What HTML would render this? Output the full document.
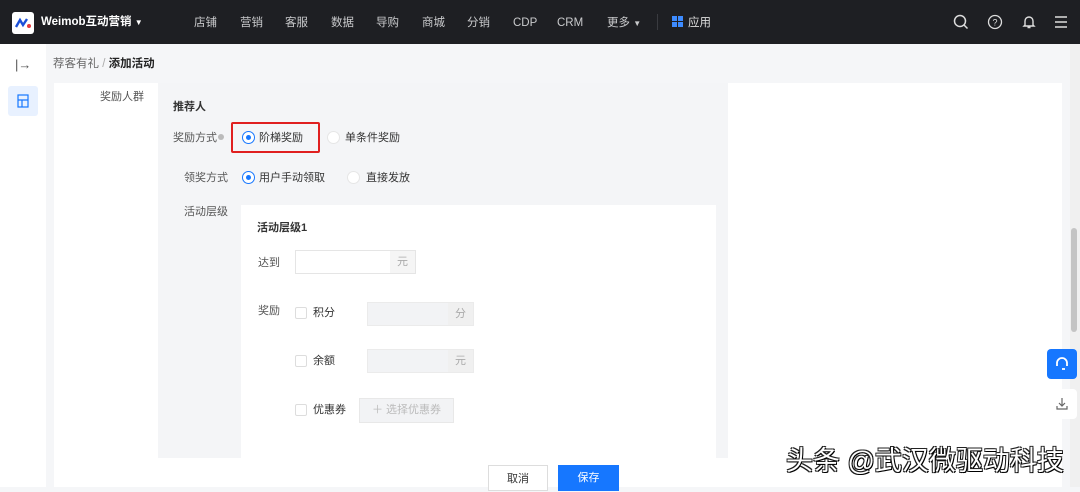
<!DOCTYPE html>
<html><head><meta charset="utf-8"><style>
*{margin:0;padding:0;box-sizing:border-box}
body{width:1080px;height:487px;overflow:hidden;background:#f5f6f8;font-family:"Liberation Sans","Noto Sans CJK SC",sans-serif;font-size:11px;line-height:18px;color:#333;position:relative}
.a{position:absolute}
.top{left:0;top:0;width:1080px;height:44px;background:#1e1f23}
.nav{color:#c9cacc;font-size:11.5px;top:14px}
.radio{width:13px;height:13px;border-radius:50%;border:1px solid #1677ff;background:#fff}
.radio::after{content:"";position:absolute;left:3px;top:3px;width:5px;height:5px;border-radius:50%;background:#1677ff}
.r0{width:13px;height:13px;border-radius:50%;border:1px solid #e6e6e6;background:#fff}
.cb{width:12px;height:12px;border:1px solid #ddd;background:#fff;border-radius:2px}
.lbl{color:#555}
</style></head><body>
<div class="a top"></div>
<div class="a" style="left:12px;top:12px;width:22px;height:22px;background:#fff;border-radius:3px"><svg width="22" height="22"><path d="M4 15 L8 8 L11 13 L15 7" stroke="#1b4fd8" stroke-width="2.4" fill="none"/><circle cx="17" cy="14" r="2" fill="#e4393c"/></svg></div>
<div class="a" style="left:41px;top:13px;color:#fff;font-weight:bold;font-size:11.5px">Weimob互动营销 <span style="font-size:8px">▼</span></div>
<div class="a nav" style="left:194px">店铺</div>
<div class="a nav" style="left:240px">营销</div>
<div class="a nav" style="left:285px">客服</div>
<div class="a nav" style="left:331px">数据</div>
<div class="a nav" style="left:376px">导购</div>
<div class="a nav" style="left:422px">商城</div>
<div class="a nav" style="left:467px">分销</div>
<div class="a nav" style="left:513px">CDP</div>
<div class="a nav" style="left:557px">CRM</div>
<div class="a nav" style="left:607px">更多 <span style="font-size:8px">▼</span></div>
<div class="a" style="left:657px;top:14px;width:1px;height:16px;background:#3a3b40"></div>
<div class="a" style="left:672px;top:16px;width:11px;height:11px;background:linear-gradient(#3d8bff,#3d8bff) 0 0/5px 5px no-repeat,linear-gradient(#3d8bff,#3d8bff) 6px 0/5px 5px no-repeat,linear-gradient(#3d8bff,#3d8bff) 0 6px/5px 5px no-repeat,linear-gradient(#3d8bff,#3d8bff) 6px 6px/5px 5px no-repeat"></div>
<div class="a nav" style="left:688px;color:#ddd">应用</div>
<svg class="a" style="left:953px;top:14px" width="16" height="16"><circle cx="7" cy="7" r="5.5" stroke="#ddd" stroke-width="1.5" fill="none"/><path d="M11 11l3.5 3.5" stroke="#ddd" stroke-width="1.5"/></svg>
<svg class="a" style="left:987px;top:14px" width="16" height="16"><circle cx="8" cy="8" r="6.5" stroke="#ddd" stroke-width="1.3" fill="none"/><text x="8" y="11.5" font-size="9" fill="#ddd" text-anchor="middle" font-family="Liberation Sans">?</text></svg>
<svg class="a" style="left:1021px;top:14px" width="16" height="16"><path d="M4 11V7a4 4 0 018 0v4l1 1H3z M6.5 13.5h3" stroke="#ddd" stroke-width="1.4" fill="none"/></svg>
<svg class="a" style="left:1054px;top:15px" width="14" height="14"><path d="M1 2h12M1 7h12M1 12h12" stroke="#ddd" stroke-width="1.5"/></svg>
<div class="a" style="left:0;top:44px;width:46px;height:443px;background:#fff"></div>
<div class="a" style="left:15px;top:56px;color:#555;font-size:13px">|→</div>
<div class="a" style="left:8px;top:86px;width:30px;height:30px;background:#e8f1ff;border-radius:3px"><svg width="30" height="30"><rect x="10" y="9" width="10" height="12" stroke="#1677ff" fill="none" stroke-width="1.2"/><path d="M10 14h10M14 14v7" stroke="#1677ff" stroke-width="1.2"/></svg></div>
<div class="a" style="left:53px;top:55px;color:#666;font-size:11.5px">荐客有礼 <span style="color:#aaa">/</span> <b style="color:#222">添加活动</b></div>
<div class="a" style="left:54px;top:83px;width:104px;height:375px;background:#fff"></div>
<div class="a" style="left:158px;top:83px;width:570px;height:375px;background:#f4f5f7"></div>
<div class="a" style="left:728px;top:83px;width:334px;height:375px;background:#fff"></div>
<div class="a lbl" style="left:100px;top:88px">奖励人群</div>
<div class="a" style="left:173px;top:98px;font-weight:bold;color:#333">推荐人</div>
<div class="a lbl" style="left:173px;top:129px">奖励方式</div>
<div class="a" style="left:218px;top:134px;width:6px;height:6px;border-radius:50%;background:#bbb"></div>
<div class="a" style="left:231px;top:122px;width:89px;height:31px;border:2px solid #e02020;border-radius:2px"></div>
<div class="a radio" style="left:242px;top:131px"></div>
<div class="a" style="left:259px;top:129px">阶梯奖励</div>
<div class="a r0" style="left:327px;top:131px"></div>
<div class="a" style="left:345px;top:129px">单条件奖励</div>
<div class="a lbl" style="left:184px;top:169px">领奖方式</div>
<div class="a radio" style="left:242px;top:171px"></div>
<div class="a" style="left:259px;top:169px">用户手动领取</div>
<div class="a r0" style="left:347px;top:171px"></div>
<div class="a" style="left:366px;top:169px">直接发放</div>
<div class="a lbl" style="left:184px;top:203px">活动层级</div>
<div class="a" style="left:241px;top:205px;width:475px;height:253px;background:#fff"></div>
<div class="a" style="left:257px;top:219px;font-weight:bold;color:#333">活动层级1</div>
<div class="a lbl" style="left:258px;top:254px">达到</div>
<div class="a" style="left:295px;top:250px;width:121px;height:24px;border:1px solid #e5e5e5;background:#fff"></div>
<div class="a" style="left:390px;top:251px;width:25px;height:22px;background:#f5f5f5;color:#aaa;text-align:center;line-height:22px">元</div>
<div class="a lbl" style="left:258px;top:302px">奖励</div>
<div class="a cb" style="left:295px;top:307px"></div>
<div class="a" style="left:313px;top:304px">积分</div>
<div class="a" style="left:367px;top:302px;width:107px;height:24px;background:#f2f3f5;border:1px solid #ebebeb"></div>
<div class="a" style="left:448px;top:303px;width:25px;height:22px;background:#f0f0f0;color:#aaa;text-align:center;line-height:22px">分</div>
<div class="a cb" style="left:295px;top:355px"></div>
<div class="a" style="left:313px;top:352px">余额</div>
<div class="a" style="left:367px;top:349px;width:107px;height:24px;background:#f2f3f5;border:1px solid #ebebeb"></div>
<div class="a" style="left:448px;top:350px;width:25px;height:22px;background:#f0f0f0;color:#aaa;text-align:center;line-height:22px">元</div>
<div class="a cb" style="left:295px;top:404px"></div>
<div class="a" style="left:313px;top:401px">优惠券</div>
<div class="a" style="left:359px;top:398px;width:95px;height:25px;background:#f2f3f5;border:1px solid #e8e8e8;color:#bbb;text-align:center;line-height:23px">＋ 选择优惠券</div>
<div class="a" style="left:54px;top:458px;width:1008px;height:29px;background:#fff"></div>
<div class="a" style="left:488px;top:465px;width:60px;height:26px;border:1px solid #ddd;background:#fff;text-align:center;line-height:26px">取消</div>
<div class="a" style="left:558px;top:465px;width:61px;height:26px;background:#1677ff;color:#fff;text-align:center;line-height:26px">保存</div>
<div class="a" style="left:1070px;top:44px;width:10px;height:443px;background:#f0f0f0"></div>
<div class="a" style="left:1071px;top:228px;width:6px;height:104px;background:#c4c4c4;border-radius:3px"></div>
<div class="a" style="left:1047px;top:349px;width:30px;height:30px;background:#1677ff;border-radius:4px"><svg width="30" height="30"><path d="M10 17v-3a5 5 0 0110 0v3M15 20h3" stroke="#fff" stroke-width="1.8" fill="none"/></svg></div>
<div class="a" style="left:1047px;top:389px;width:30px;height:30px;background:#fff;border-radius:4px"><svg width="30" height="30"><path d="M15 9v8M12 14l3 3 3-3M10 17v3h10v-3" stroke="#666" stroke-width="1.2" fill="none"/></svg></div>
<div class="a" style="left:786px;top:443px;font-size:27px;line-height:36px;color:#fff;text-shadow:1px 1px 0 #000,-1px -1px 0 #222,1px -1px 0 #222,-1px 1px 0 #222">头条 @武汉微驱动科技</div>
</body></html>
